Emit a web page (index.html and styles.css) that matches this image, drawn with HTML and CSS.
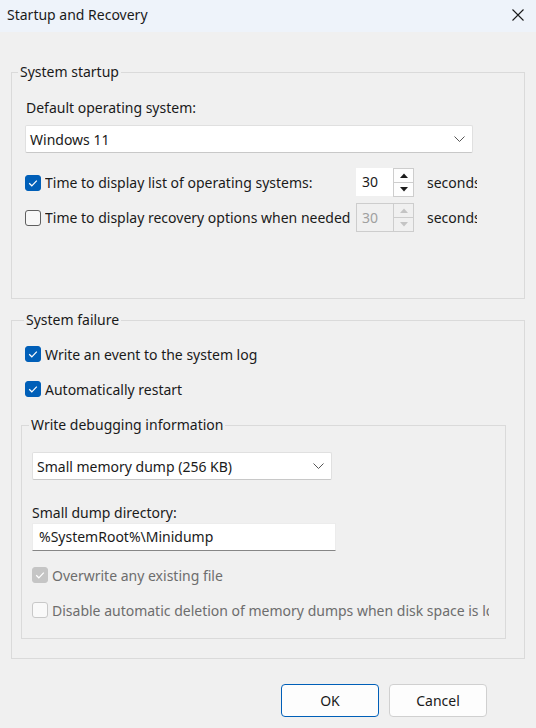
FILE: index.html
```html
<!DOCTYPE html>
<html>
<head>
<meta charset="utf-8">
<link rel="stylesheet" href="styles.css">
</head>
<body>
<div class="dialog">
  <div class="titlebar">
    <span class="title">Startup and Recovery</span>
    <svg class="close" width="12" height="12" viewBox="0 0 12 12"><path d="M0.5 0.5 L11.5 11.5 M11.5 0.5 L0.5 11.5" stroke="#1a1a1a" stroke-width="1.1" fill="none"/></svg>
  </div>
  <div class="content">
    <div class="group g1">
      <div class="group-title">System startup</div>
      <div class="label l-default">Default operating system:</div>
      <div class="combo c1"><span>Windows 11</span><svg class="chev" width="11" height="6" viewBox="0 0 11 6"><path d="M0.5 0.5 L5.5 5.5 L10.5 0.5" stroke="#555" stroke-width="1" fill="none"/></svg></div>
      <div class="row r1">
        <span class="cb checked"><svg width="16" height="16" viewBox="0 0 16 16"><path d="M4.2 8.3 L6.8 10.8 L11.8 5.6" stroke="#fff" stroke-width="1.2" fill="none"/></svg></span>
        <span class="rowlabel">Time to display list of operating systems:</span>
        <span class="spin">
          <span class="spin-text">30</span>
          <span class="spin-btns">
            <span class="sb up"><svg width="8" height="5" viewBox="0 0 8 5"><path d="M0 5 L4 0.5 L8 5 Z" fill="#1a1a1a"/></svg></span>
            <span class="sb down"><svg width="8" height="5" viewBox="0 0 8 5"><path d="M0 0 L4 4.5 L8 0 Z" fill="#1a1a1a"/></svg></span>
          </span>
        </span>
        <span class="secs">seconds</span>
      </div>
      <div class="row r2">
        <span class="cb"></span>
        <span class="rowlabel">Time to display recovery options when needed:</span>
        <span class="spin disabled">
          <span class="spin-text">30</span>
          <span class="spin-btns">
            <span class="sb up"><svg width="8" height="5" viewBox="0 0 8 5"><path d="M0 5 L4 0.5 L8 5 Z" fill="#c4c4c4"/></svg></span>
            <span class="sb down"><svg width="8" height="5" viewBox="0 0 8 5"><path d="M0 0 L4 4.5 L8 0 Z" fill="#c4c4c4"/></svg></span>
          </span>
        </span>
        <span class="secs">seconds</span>
      </div>
    </div>

    <div class="group g2">
      <div class="group-title">System failure</div>
      <div class="row r3">
        <span class="cb checked"><svg width="16" height="16" viewBox="0 0 16 16"><path d="M4.2 8.3 L6.8 10.8 L11.8 5.6" stroke="#fff" stroke-width="1.2" fill="none"/></svg></span>
        <span class="text">Write an event to the system log</span>
      </div>
      <div class="row r4">
        <span class="cb checked"><svg width="16" height="16" viewBox="0 0 16 16"><path d="M4.2 8.3 L6.8 10.8 L11.8 5.6" stroke="#fff" stroke-width="1.2" fill="none"/></svg></span>
        <span class="text">Automatically restart</span>
      </div>
      <div class="group g3">
        <div class="group-title">Write debugging information</div>
        <div class="combo c2"><span>Small memory dump (256 KB)</span><svg class="chev" width="11" height="6" viewBox="0 0 11 6"><path d="M0.5 0.5 L5.5 5.5 L10.5 0.5" stroke="#555" stroke-width="1" fill="none"/></svg></div>
        <div class="label l-dir">Small dump directory:</div>
        <div class="input">%SystemRoot%\Minidump</div>
        <div class="row r5">
          <span class="cb dis-checked"><svg width="16" height="16" viewBox="0 0 16 16"><path d="M4.2 8.3 L6.8 10.8 L11.8 5.6" stroke="#fff" stroke-width="1.2" fill="none"/></svg></span>
          <span class="text dis">Overwrite any existing file</span>
        </div>
        <div class="row r6">
          <span class="cb dis-unchecked"></span>
          <span class="text dis clip">Disable automatic deletion of memory dumps when disk space is low</span>
        </div>
      </div>
    </div>

    <div class="buttons">
      <span class="btn default">OK</span>
      <span class="btn">Cancel</span>
    </div>
  </div>
</div>
</body>
</html>
```

FILE: styles.css
```css
* { box-sizing: border-box; }
html, body {
  margin: 0;
  padding: 0;
}
body {
  width: 536px;
  height: 728px;
  background: #f0f0f0;
  font-family: "Noto Sans", "Open Sans", sans-serif;
  font-size: 14px;
  color: #1a1a1a;
  overflow: hidden;
}
.dialog {
  width: 536px;
  height: 728px;
  background: #f0f0f0;
}
.titlebar {
  height: 32px;
  background: #eef3fa;
  display: flex;
  align-items: center;
  justify-content: space-between;
  padding: 0 12px 4px 7px;
}
.title {
  font-size: 14px;
  color: #1a1a1a;
}
.close { display: block; margin-top: 2px; }

.content {
  padding: 40px 11px 0 11px;
}
.group {
  border: 1px solid #dadada;
}
.group-title {
  width: fit-content;
  margin-top: -11px;
  line-height: 20px;
  height: 20px;
  padding: 0 2px;
  background: #f0f0f0;
  white-space: nowrap;
}
.g1 {
  padding: 0 13px 66px 13px;
}
.g1 > .group-title { margin-left: -7px; }
.label {
  line-height: 20px;
  height: 20px;
  white-space: nowrap;
}
.l-default { margin-top: 16px; margin-left: 1px; }

.combo {
  background: #fff;
  border: 1px solid #e0e0e0;
  border-bottom-color: #c8c8c8;
  border-radius: 2px;
  height: 28px;
  display: flex;
  align-items: center;
  justify-content: space-between;
  padding: 0 7px 0 4px;
}
.c1 { margin-top: 7px; width: 448px; }
.chev { display: block; }

.row {
  display: flex;
  align-items: center;
  white-space: nowrap;
}
.cb {
  flex: none;
  width: 16px;
  height: 16px;
  border-radius: 3px;
  border: 1px solid #5f5f5f;
  background: #f7f7f7;
  margin-right: 4px;
  display: block;
}
.cb svg { display: block; margin: -1px; }
.cb.checked { background: #005fb8; border-color: #005fb8; }
.cb.dis-checked { background: #c5c5c5; border-color: #c5c5c5; }
.cb.dis-unchecked { background: #f9f9f9; border-color: #c8c8c8; }

.r1 { margin-top: 15px; height: 29px; }
.r2 { margin-top: 6px; height: 29px; }
.rowlabel {
  width: 306px;
  overflow: hidden;
  margin-right: 5px;
}
.spin {
  display: flex;
  height: 29px;
  flex: none;
}
.spin-text {
  width: 37px;
  background: #fff;
  padding-left: 6px;
  line-height: 27px;
  border-bottom: 1px solid #f0f0f0;
}
.spin-btns {
  width: 21px;
  display: flex;
  flex-direction: column;
  border: 1px solid #cdcdcd;
  background: #fdfdfd;
}
.sb {
  flex: 1;
  display: flex;
  align-items: center;
  justify-content: center;
}
.sb.up { border-bottom: 1px solid #cdcdcd; }
.spin.disabled .spin-text {
  background: #f0f0f0;
  color: #a0a0a0;
  border: 1px solid #cdcdcd;
  border-right: none;
  padding-left: 5px;
  line-height: 27px;
}
.spin.disabled .spin-btns { background: #f0f0f0; }
.secs {
  margin-left: 13px;
  width: 50px;
  overflow: hidden;
}

.g2 {
  margin-top: 21px;
  padding: 0 18px 19px 9px;
}
.g2 > .group-title { margin-left: 3px; }
.r3 { margin-top: 14px; margin-left: 4px; height: 20px; }
.r4 { margin-top: 15px; margin-left: 4px; height: 20px; }

.g3 {
  margin-top: 26px;
  padding: 0 10px 18px 10px;
}
.g3 > .group-title { margin-left: -3px; }
.c2 { margin-top: 17px; width: 300px; }
.l-dir { margin-top: 23px; }
.input {
  width: 304px;
  height: 28px;
  background: #fff;
  border: 1px solid #ececec;
  border-bottom-color: #868686;
  padding-left: 6px;
  line-height: 26px;
}
.r5 { margin-top: 14px; height: 20px; }
.r6 { margin-top: 15px; height: 20px; }
.text.dis { color: #6d6d6d; }
.clip { width: 437px; overflow: hidden; }

.buttons {
  display: flex;
  justify-content: flex-end;
  gap: 10px;
  margin-top: 25px;
  padding-right: 38px;
}
.btn {
  width: 98px;
  height: 33px;
  border: 1px solid #d0d0d0;
  border-radius: 4px;
  background: #fdfdfd;
  display: flex;
  align-items: center;
  justify-content: center;
}
.btn.default {
  border-color: #005fb8;
}
```
